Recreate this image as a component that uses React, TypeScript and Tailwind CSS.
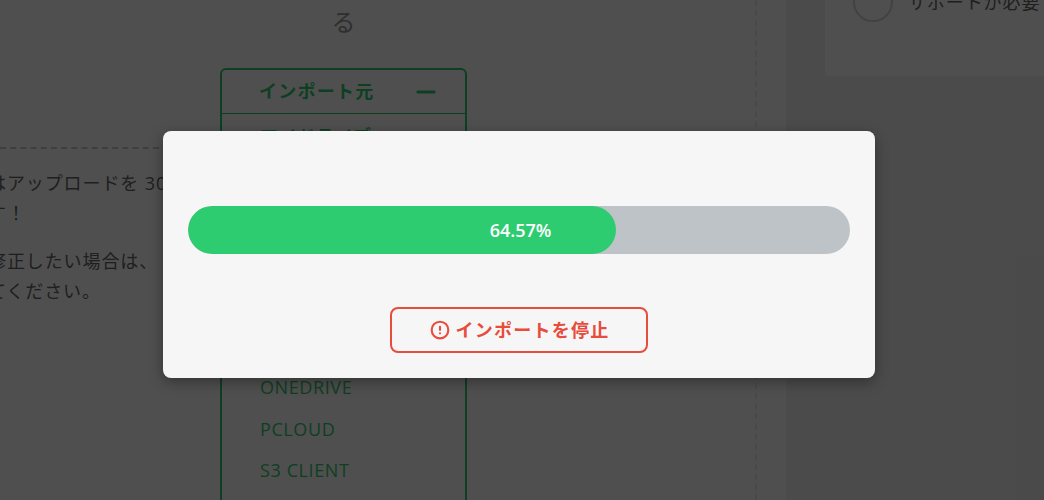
import { CircleAlert, Minus } from "lucide-react";

const sources = ["マイドライブ", "URL", "DROPBOX", "GOOGLE DRIVE", "GOOGLE PHOTOS", "BOX", "ONEDRIVE", "PCLOUD", "S3 CLIENT"];
const progress = 64.65;

const font = "font-['Open_Sans','Noto_Sans_CJK_JP',sans-serif]";

export default function App() {
  return (
    <div className={`relative flex h-[500px] w-full overflow-hidden bg-white ${font}`}>
      {/* page behind the dialog */}
      <div className="flex w-[757px] shrink-0 border-r-2 border-dashed border-[#ececec]">
        <div className="mt-[147px] w-[220px] shrink-0 border-t-2 border-dashed border-[#cccccc] pt-[19px] text-[18px] leading-[30px] tracking-[0.9px] text-[#666666]">
          <div className="-ml-3 whitespace-nowrap">
            <p>はアップロードを 30</p>
            <p>す！</p>
            <p className="mt-[18px]">修正したい場合は、</p>
            <p>てください。</p>
          </div>
        </div>
        <div className="w-[247px] shrink-0">
          <p className="mt-[7px] text-center text-[24px] leading-[30px] text-[#999999]">る</p>
          <div className="mt-[31px] h-[600px] rounded-md border-2 border-[#2ecc71] text-[#2ecc71]">
            <div className="flex h-[44px] items-center justify-between border-b border-[#2ecc71] pl-[37px] pr-[25px] text-[18px] font-bold tracking-[1.25px]">
              <span>インポート元</span>
              <Minus className="h-7 w-7" strokeWidth={2.5} />
            </div>
            <ul className="pt-[4px]">
              {sources.map((s) => (
                <li key={s} className="flex h-[41.5px] items-center pl-[38px] text-[18px] font-medium tracking-[0.6px] first:pb-1">
                  {s}
                </li>
              ))}
            </ul>
          </div>
        </div>
      </div>
      <div className="ml-[29px] flex-1 bg-[#f0f0f0] pl-[39px]">
        <div className="h-[76px] overflow-hidden bg-white pl-[28px]">
          <div className="-mt-[18px] flex items-center gap-[15px]">
            <span className="h-10 w-10 shrink-0 rounded-full border-2 border-[#d4d4d4] bg-white" />
            <span className="whitespace-nowrap text-[18px] tracking-[0.9px] text-[#666666]">サポートが必要</span>
          </div>
        </div>
      </div>

      {/* import progress dialog */}
      <div className="absolute inset-0 bg-[rgba(0,0,0,0.69)]">
        <div className="ml-[163px] mt-[131px] h-[247px] w-[712px] rounded-lg bg-[#f6f6f6] px-[25px] pt-[75px] shadow-[0_4px_14px_rgba(0,0,0,0.35)]">
          <div className="relative h-12 overflow-hidden rounded-full bg-[#bdc3c7]">
            <div className="h-full rounded-full bg-[#2ecc71]" style={{ width: `${progress}%` }} />
            <div className="absolute inset-0 flex items-center justify-center pl-[3px] text-[18px] font-semibold text-white">
              64.57%
            </div>
          </div>
          <button className="mx-auto mt-[53px] flex h-[46px] w-[258px] items-center justify-center gap-[6px] rounded-lg border-2 border-[#e74c3c] pl-px text-[18px] font-bold tracking-[1.25px] text-[#e74c3c]">
            <CircleAlert className="h-5 w-5" strokeWidth={2.5} />
            インポートを停止
          </button>
        </div>
      </div>
    </div>
  );
}
